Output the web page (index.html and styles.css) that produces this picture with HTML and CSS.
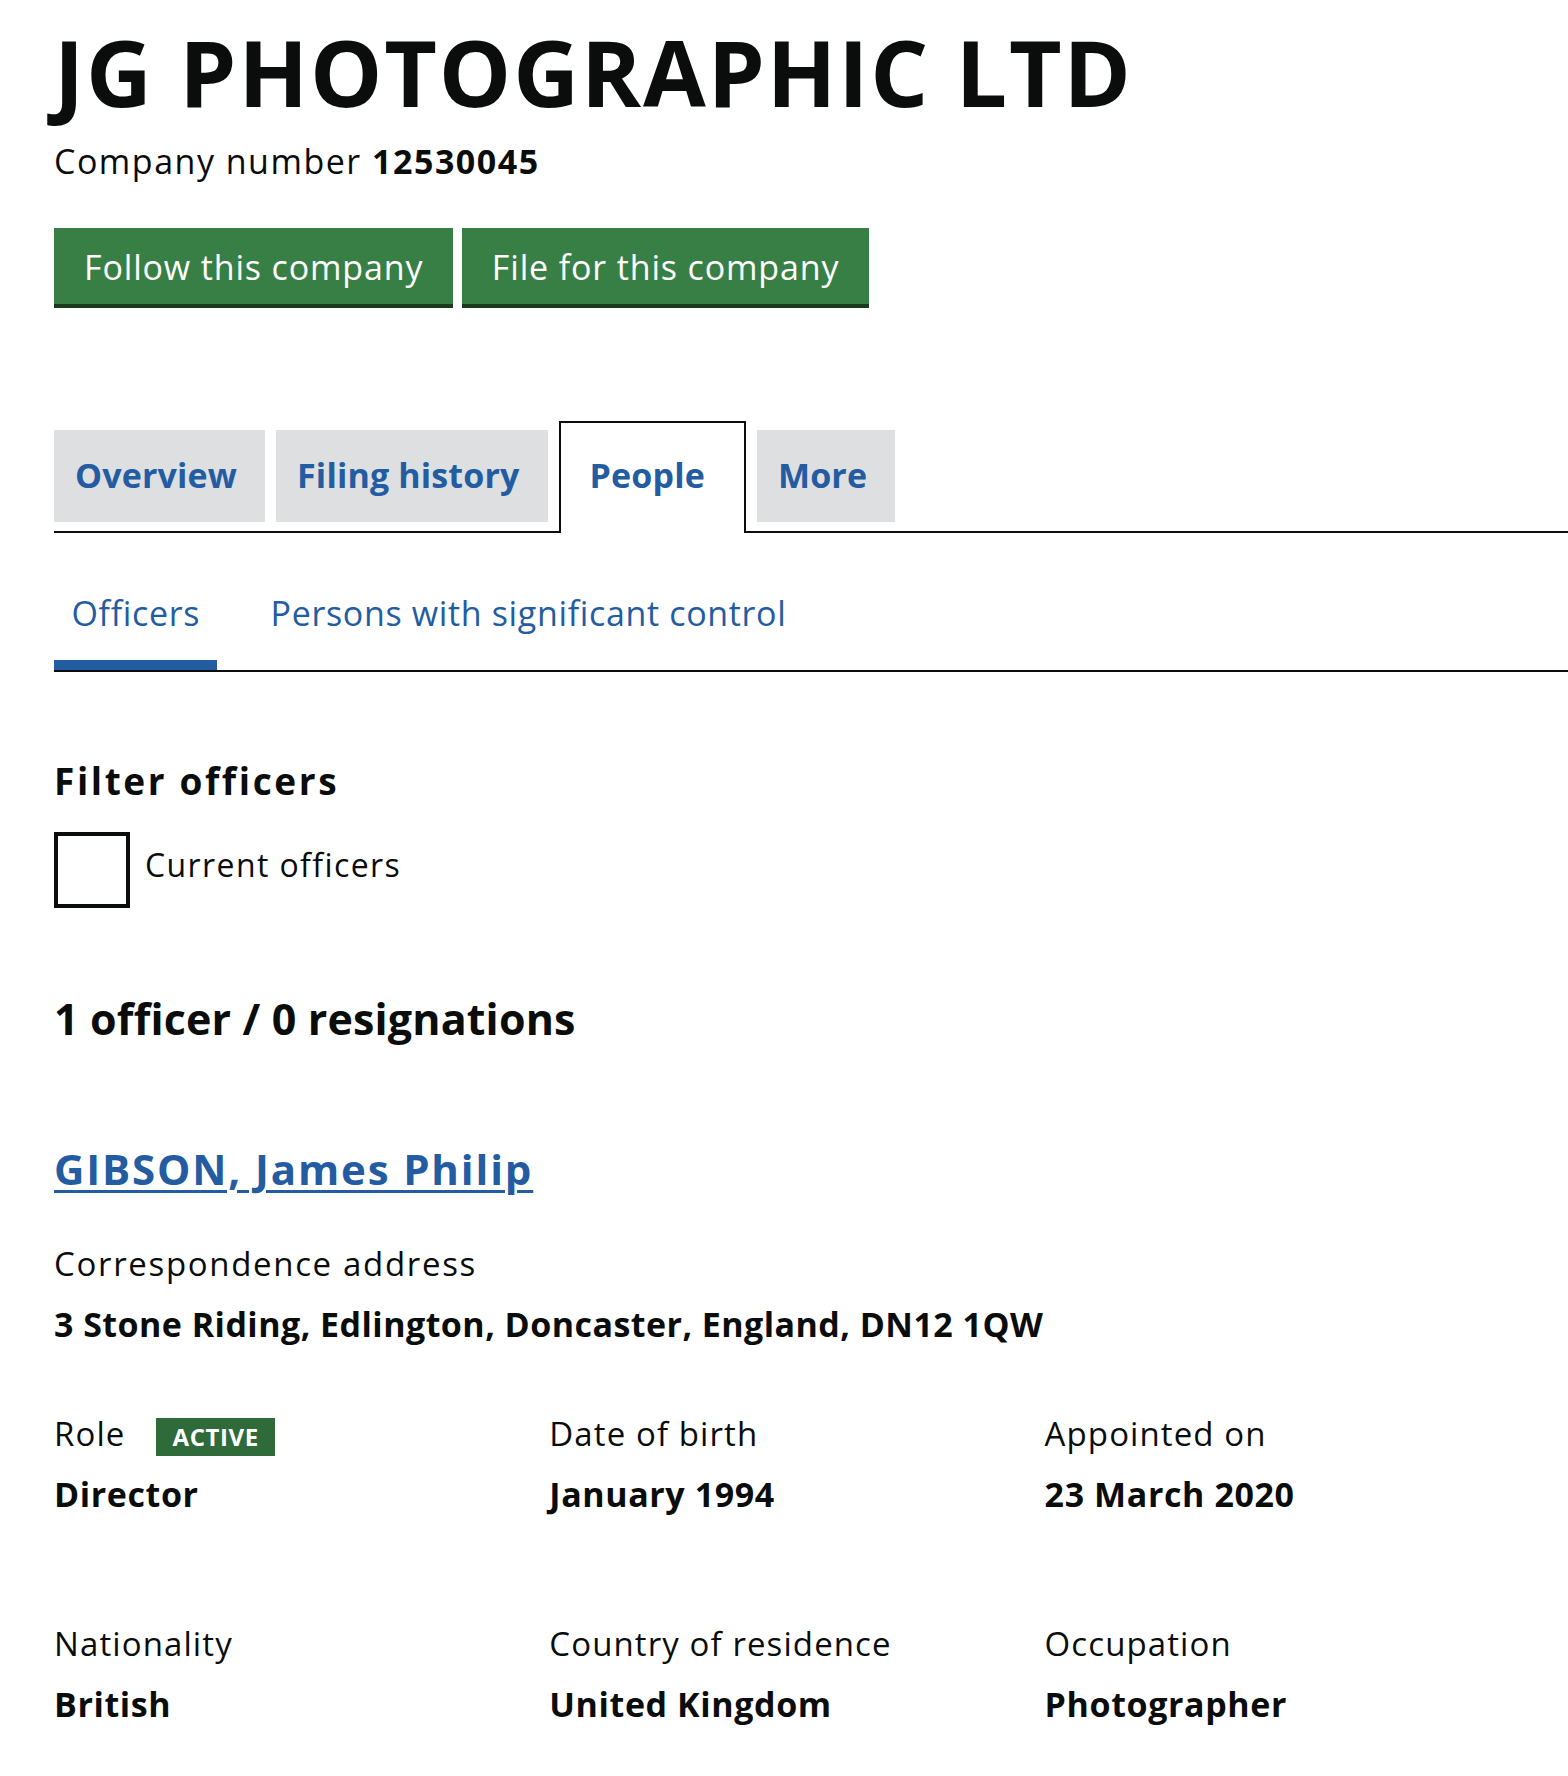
FILE: index.html
```html
<!DOCTYPE html>
<html lang="en">
<head>
<meta charset="utf-8">
<title>JG PHOTOGRAPHIC LTD - People</title>
<link rel="stylesheet" href="styles.css">
</head>
<body>
<main class="page">
  <h1 class="company-name">JG PHOTOGRAPHIC LTD</h1>
  <p class="company-number">Company number <strong>12530045</strong></p>

  <div class="actions">
    <a class="button" href="#">Follow this company</a>
    <a class="button" href="#">File for this company</a>
  </div>

  <ul class="tabs">
    <li class="tab"><a href="#">Overview</a></li>
    <li class="tab"><a href="#">Filing history</a></li>
    <li class="tab tab-selected"><a href="#">People</a></li>
    <li class="tab"><a href="#">More</a></li>
  </ul>

  <ul class="subnav">
    <li class="subnav-item subnav-current"><a href="#">Officers</a></li>
    <li class="subnav-item"><a href="#">Persons with significant control</a></li>
  </ul>

  <h2 class="filter-heading">Filter officers</h2>
  <div class="checkbox">
    <span class="checkbox-box"></span>
    <span class="checkbox-label">Current officers</span>
  </div>

  <h2 class="count-heading">1 officer / 0 resignations</h2>

  <div class="appointment">
    <h2 class="officer-name"><a href="#">GIBSON, James Philip</a></h2>
    <p class="field-label address-label">Correspondence address</p>
    <p class="field-value address-value">3 Stone Riding, Edlington, Doncaster, England, DN12 1QW</p>

    <dl class="details">
      <div class="detail">
        <dt class="field-label">Role<span class="status-tag">ACTIVE</span></dt>
        <dd class="field-value">Director</dd>
      </div>
      <div class="detail">
        <dt class="field-label">Date of birth</dt>
        <dd class="field-value">January 1994</dd>
      </div>
      <div class="detail">
        <dt class="field-label">Appointed on</dt>
        <dd class="field-value">23 March 2020</dd>
      </div>
      <div class="detail">
        <dt class="field-label">Nationality</dt>
        <dd class="field-value">British</dd>
      </div>
      <div class="detail">
        <dt class="field-label">Country of residence</dt>
        <dd class="field-value">United Kingdom</dd>
      </div>
      <div class="detail">
        <dt class="field-label">Occupation</dt>
        <dd class="field-value">Photographer</dd>
      </div>
    </dl>
  </div>
</main>
</body>
</html>
```

FILE: styles.css
```css
* {
  box-sizing: border-box;
}

body {
  margin: 0;
  background: #ffffff;
  color: #0b0c0c;
  font-family: "Open Sans", "Liberation Sans", sans-serif;
  overflow-x: hidden;
}

.page {
  padding: 22px 0 60px 54px;
}

.company-name {
  margin: 0;
  font-size: 91px;
  line-height: 100px;
  font-weight: 700;
  letter-spacing: 1.9px;
}

.company-number {
  margin: 18.5px 0 0;
  font-size: 34px;
  line-height: 40px;
  letter-spacing: 1.5px;
}

.company-number strong {
  font-weight: 700;
}

.actions {
  display: flex;
  gap: 8.5px;
  margin-top: 47.5px;
}

.button {
  display: block;
  height: 76px;
  padding: 3px 30px 0;
  background: #387f45;
  box-shadow: 0 4px 0 #1a3a20;
  color: #ffffff;
  font-size: 34px;
  line-height: 73px;
  letter-spacing: 0.85px;
  text-decoration: none;
}

.tabs {
  display: flex;
  align-items: flex-end;
  margin: 116.7px 0 0;
  padding: 0;
  list-style: none;
  border-bottom: 2px solid #0b0c0c;
}

.tab {
  margin: 0 11px 9px 0;
  background: #dedfe1;
}

.tab a {
  display: block;
  padding: 0 28px 0 21px;
  color: #245ca1;
  font-size: 34px;
  font-weight: 700;
  line-height: 91.7px;
  letter-spacing: 0.15px;
  text-decoration: none;
}

.tab-selected {
  margin-bottom: -2px;
  background: #ffffff;
  border: 2px solid #0b0c0c;
  border-bottom: 0;
}

.tab-selected a {
  padding: 7.5px 39px 10.8px 29px;
}

.subnav {
  display: flex;
  gap: 36px;
  margin: 60.1px 0 0;
  padding: 0;
  list-style: none;
  border-bottom: 2px solid #0b0c0c;
}

.subnav-item a {
  display: block;
  padding: 0 17px 27.2px 17.5px;
  border-bottom: 10px solid transparent;
  color: #245ca1;
  font-size: 34px;
  line-height: 40px;
  letter-spacing: 0.65px;
  text-decoration: none;
}

.subnav-current a {
  border-bottom-color: #245ca1;
}

.filter-heading {
  margin: 87px 0 0;
  font-size: 37px;
  line-height: 44px;
  font-weight: 700;
  letter-spacing: 2.6px;
}

.checkbox {
  display: flex;
  align-items: flex-start;
  gap: 15px;
  margin-top: 29px;
}

.checkbox-box {
  width: 76px;
  height: 76px;
  border: 4px solid #0b0c0c;
  background: #ffffff;
}

.checkbox-label {
  padding-top: 13px;
  font-size: 32px;
  line-height: 40px;
  letter-spacing: 1.4px;
}

.count-heading {
  margin: 86.3px 0 0;
  font-size: 43px;
  line-height: 50px;
  font-weight: 700;
  letter-spacing: 0.15px;
}

.officer-name {
  margin: 99.4px 0 0;
  font-size: 42px;
  line-height: 50px;
  font-weight: 700;
  letter-spacing: 1.85px;
}

.officer-name a {
  color: #245ca1;
  text-decoration: underline;
  text-decoration-thickness: 3px;
  text-underline-offset: 5px;
}

.field-label {
  margin: 0;
  font-size: 33px;
  line-height: 40px;
  letter-spacing: 1.1px;
}

.field-value {
  margin: 0;
  font-size: 34px;
  line-height: 40px;
  font-weight: 700;
  letter-spacing: 0.6px;
}

.address-label {
  letter-spacing: 1.67px;
  margin-top: 50.2px;
}

.address-value {
  margin-top: 20.6px;
  letter-spacing: 0.45px;
}

.details {
  display: grid;
  grid-template-columns: repeat(3, 495.3px);
  row-gap: 110.4px;
  margin: 69.7px 0 0;
}

.details dt {
  height: 40px;
}

.details dd {
  margin-top: 19.6px;
}

.status-tag {
  display: inline-block;
  margin-left: 31px;
  padding: 5px 16px;
  background: #2f6a3b;
  color: #ffffff;
  font-size: 24px;
  line-height: 28px;
  font-weight: 700;
  letter-spacing: 0.6px;
  vertical-align: baseline;
}
```
